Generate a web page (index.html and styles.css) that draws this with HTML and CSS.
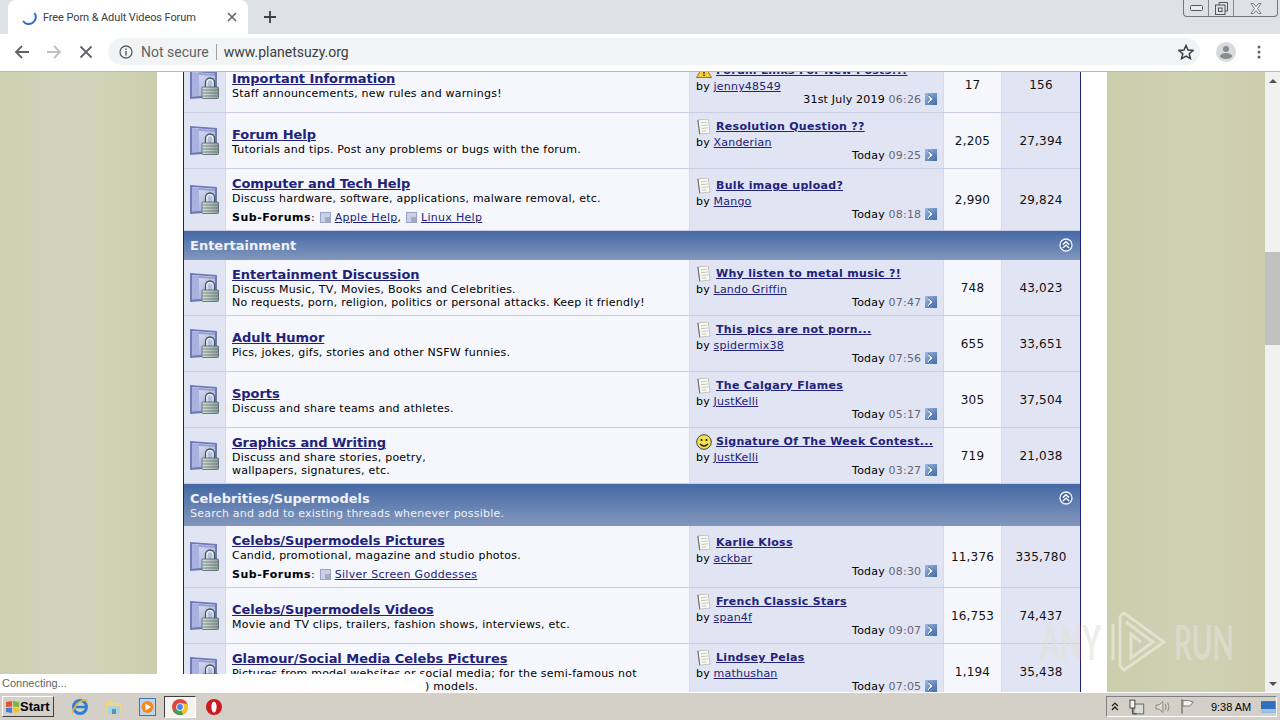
FILE: index.html
```html
<!DOCTYPE html>
<html lang="en">
<head>
    <meta charset="UTF-8">
    <meta name="viewport" content="width=device-width, initial-scale=1.0">
    <title>Free Porn &amp; Adult Videos Forum</title>
    <link rel="stylesheet" href="styles.css">
</head>
<body>
    <svg class="defs" width="0" height="0">
        <defs>
            <linearGradient id="gFolder" x1="0" y1="0" x2="1" y2="1">
                <stop offset="0" stop-color="#e4e6f8"/>
                <stop offset="1" stop-color="#98a3d0"/>
            </linearGradient>
            <linearGradient id="gLock" x1="0" y1="0" x2="1" y2="0">
                <stop offset="0" stop-color="#dbe5e2"/>
                <stop offset="1" stop-color="#8d9f9d"/>
            </linearGradient>
            <linearGradient id="gArrow" x1="0" y1="0" x2="1" y2="1">
                <stop offset="0" stop-color="#9dbbe6"/>
                <stop offset="1" stop-color="#3f69a8"/>
            </linearGradient>
            <symbol id="lockFolder" viewBox="0 0 29 29">
                <path d="M0 0 L27 2 V27 L0 29 Z" fill="#6f7ab8"/>
                <path d="M2 2 L25 3.500 V25 L2 26.500 Z" fill="url(#gFolder)"/>
                <path d="M2 2 L9 3 V25.500 L2 26.500 Z" fill="#a9b1e0"/>
                <path d="M9 3 L25 4 V6 L9 5 Z" fill="#98a2d0"/>
                <path d="M15.500 17 V12.500 a4.500 4.500 0 0 1 9 0 V17" fill="none" stroke="#46545a" stroke-width="1.300"/>
                <path d="M17 17 V12.700 a3 3 0 0 1 6 0 V17" fill="none" stroke="#eef2f2" stroke-width="1.200"/>
                <rect x="12" y="17" width="16.500" height="11.500" rx="1" fill="url(#gLock)" stroke="#4f5f5e" stroke-width=".8"/>
                <path d="M12.500 20 H28 M12.500 23 H28 M12.500 26 H28" stroke="#667877" stroke-width=".9"/>
            </symbol>
            <symbol id="subFolder" viewBox="0 0 11 11">
                <rect width="11" height="11" fill="#98a3c8"/>
                <rect x="1" y="1" width="9" height="9" fill="#c9d0e8"/>
                <rect x="5" y="5" width="5" height="5" fill="#a2adb8"/>
            </symbol>
            <symbol id="doc" viewBox="0 0 15 17">
                <path d="M1 1 L12 0 L14 15 L3 16 Z" fill="#fafaf6" stroke="#b4b4aa" stroke-width=".8"/>
                <path d="M1 1 L3 16" stroke="#6a6a64" stroke-width="1.100"/>
                <path d="M4 4 L11 3.400 M4.400 7 L11.600 6.400 M4.800 10 L12 9.400 M5 13 L10 12.600" stroke="#c2c2b8" stroke-width="1"/>
            </symbol>
            <symbol id="goPost" viewBox="0 0 12 12">
                <rect width="12" height="12" fill="url(#gArrow)"/>
                <path d="M4 2 L8.500 6 L4 10 H2.500 L5.500 6 L2.500 2 Z" fill="#fff"/>
                <path d="M3 2 H4 L8.500 6 L4 10" fill="none" stroke="#1f3f78" stroke-width=".8"/>
            </symbol>
            <symbol id="collapse" viewBox="0 0 14 14">
                <circle cx="7" cy="7" r="6" fill="#46689f" stroke="#f0f4fa" stroke-width="1.300"/>
                <path d="M3.800 6.600 L7 3.800 L10.200 6.600 M3.800 10 L7 7.200 L10.200 10" fill="none" stroke="#fff" stroke-width="1.400"/>
            </symbol>
        </defs>
    </svg>

    <div class="tabstrip">
        <div class="tab">
            <svg class="spinner" width="16" height="16" viewBox="0 0 16 16"><path d="M13.500 4 A7 7 0 0 1 2 12" fill="none" stroke="#2a6fd0" stroke-width="2"/></svg>
            <span class="tabTitle">Free Porn &amp; Adult Videos Forum</span>
            <svg class="tabClose" width="10" height="10" viewBox="0 0 10 10"><path d="M1 1 L9 9 M9 1 L1 9" stroke="#5f6368" stroke-width="1.600"/></svg>
        </div>
        <svg class="newTab" width="12" height="12" viewBox="0 0 12 12"><path d="M6 0 V12 M0 6 H12" stroke="#3c4043" stroke-width="1.800"/></svg>
        <div class="winControls">
            <div class="winBtn winMin"><svg width="13" height="6" viewBox="0 0 13 6"><rect x=".5" y=".5" width="12" height="5" rx="1" fill="#e8eaee" stroke="#555"/></svg></div>
            <div class="winBtn winMax"><svg width="13" height="13" viewBox="0 0 13 13"><path d="M4 3 V.5 H12.500 V9 H10" fill="none" stroke="#555"/><rect x=".5" y="3" width="9.500" height="9.500" fill="none" stroke="#555"/><rect x="3.500" y="6" width="3.500" height="3.500" fill="none" stroke="#555"/></svg></div>
            <div class="winBtn winClose"><svg width="12" height="11" viewBox="0 0 12 11"><path d="M1 .5 H3.500 L6 3.500 L8.500 .5 H11 L7.500 5.500 L11 10.500 H8.500 L6 7.500 L3.500 10.500 H1 L4.500 5.500 Z" fill="#eef0f3" stroke="#666" stroke-width=".8"/></svg></div>
        </div>
    </div>

    <div class="toolbar">
        <svg class="navIcon" width="16" height="16" viewBox="0 0 16 16"><path d="M15 8 H2 M8 2 L2 8 L8 14" fill="none" stroke="#5f6368" stroke-width="1.800"/></svg>
        <svg class="navIcon" width="16" height="16" viewBox="0 0 16 16"><path d="M1 8 H14 M8 2 L14 8 L8 14" fill="none" stroke="#bdc1c6" stroke-width="1.800"/></svg>
        <svg class="navIcon" width="16" height="16" viewBox="0 0 16 16"><path d="M2.500 2.500 L13.500 13.500 M13.500 2.500 L2.500 13.500" stroke="#5f6368" stroke-width="1.800"/></svg>
        <div class="omnibox">
            <svg width="14" height="14" viewBox="0 0 14 14"><circle cx="7" cy="7" r="6" fill="none" stroke="#5f6368" stroke-width="1.300"/><path d="M7 6 V10.500 M7 3.500 V5" stroke="#5f6368" stroke-width="1.500"/></svg>
            <span class="notSecure">Not secure</span>
            <span class="omniDivider"></span>
            <span class="url">www.planetsuzy.org</span>
            <svg class="star" width="16" height="16" viewBox="0 0 16 16"><path d="M8 1.500 L10 6 L15 6.500 L11.200 9.700 L12.400 14.600 L8 12 L3.600 14.600 L4.800 9.700 L1 6.500 L6 6 Z" fill="none" stroke="#3c4043" stroke-width="1.500"/></svg>
        </div>
        <svg class="avatar" width="20" height="20" viewBox="0 0 20 20"><circle cx="10" cy="10" r="10" fill="#d9dadc"/><circle cx="10" cy="7" r="3" fill="#8a8c8f"/><ellipse cx="10" cy="14" rx="6" ry="3" fill="#8a8c8f"/></svg>
        <svg class="menuDots" width="4" height="14" viewBox="0 0 4 14"><circle cx="2" cy="2" r="1.500" fill="#5f6368"/><circle cx="2" cy="7" r="1.500" fill="#5f6368"/><circle cx="2" cy="12" r="1.500" fill="#5f6368"/></svg>
    </div>

    <div class="viewport">
        <div class="page">
            <div class="forumList">

                <div class="row">
                    <div class="cell iconCell"><svg class="lockIcon"><use href="#lockFolder"/></svg></div>
                    <div class="cell mainCell">
                        <a class="forumTitle" href="#">Important Information</a>
                        <p class="desc">Staff announcements, new rules and warnings!</p>
                    </div>
                    <div class="cell postCell">
                        <div class="postTitle">
                            <svg class="threadIcon" viewBox="0 0 16 14"><path d="M8 .5 L15.500 13.500 H.5 Z" fill="#f6cf3a" stroke="#9a7a10"/><path d="M8 5 V9.500 M8 10.500 V12" stroke="#222" stroke-width="1.500"/></svg>
                            <a href="#">Forum Links For New Posts!!!</a>
                        </div>
                        <div class="postBy">by <a href="#">jenny48549</a></div>
                        <div class="postDate">31st July 2019 <span class="time">06:26</span> <svg class="goIcon"><use href="#goPost"/></svg></div>
                    </div>
                    <div class="cell numCell">17</div>
                    <div class="cell numCell alt">156</div>
                </div>

                <div class="row">
                    <div class="cell iconCell"><svg class="lockIcon"><use href="#lockFolder"/></svg></div>
                    <div class="cell mainCell">
                        <a class="forumTitle" href="#">Forum Help</a>
                        <p class="desc">Tutorials and tips. Post any problems or bugs with the forum.</p>
                    </div>
                    <div class="cell postCell">
                        <div class="postTitle"><svg class="threadIcon"><use href="#doc"/></svg><a href="#">Resolution Question ??</a></div>
                        <div class="postBy">by <a href="#">Xanderian</a></div>
                        <div class="postDate">Today <span class="time">09:25</span> <svg class="goIcon"><use href="#goPost"/></svg></div>
                    </div>
                    <div class="cell numCell">2,205</div>
                    <div class="cell numCell alt">27,394</div>
                </div>

                <div class="row tall">
                    <div class="cell iconCell"><svg class="lockIcon"><use href="#lockFolder"/></svg></div>
                    <div class="cell mainCell">
                        <a class="forumTitle" href="#">Computer and Tech Help</a>
                        <p class="desc">Discuss hardware, software, applications, malware removal, etc.</p>
                        <div class="subForums"><strong>Sub-Forums</strong>: <svg class="subIcon"><use href="#subFolder"/></svg> <a href="#">Apple Help</a>, <svg class="subIcon"><use href="#subFolder"/></svg> <a href="#">Linux Help</a></div>
                    </div>
                    <div class="cell postCell">
                        <div class="postTitle"><svg class="threadIcon"><use href="#doc"/></svg><a href="#">Bulk image upload?</a></div>
                        <div class="postBy">by <a href="#">Mango</a></div>
                        <div class="postDate">Today <span class="time">08:18</span> <svg class="goIcon"><use href="#goPost"/></svg></div>
                    </div>
                    <div class="cell numCell">2,990</div>
                    <div class="cell numCell alt">29,824</div>
                </div>

                <div class="catHead">
                    <div><div class="catTitle">Entertainment</div></div>
                    <svg class="collapseIcon"><use href="#collapse"/></svg>
                </div>

                <div class="row">
                    <div class="cell iconCell"><svg class="lockIcon"><use href="#lockFolder"/></svg></div>
                    <div class="cell mainCell">
                        <a class="forumTitle" href="#">Entertainment Discussion</a>
                        <p class="desc">Discuss Music, TV, Movies, Books and Celebrities.<br>No requests, porn, religion, politics or personal attacks. Keep it friendly!</p>
                    </div>
                    <div class="cell postCell">
                        <div class="postTitle"><svg class="threadIcon"><use href="#doc"/></svg><a href="#">Why listen to metal music ?!</a></div>
                        <div class="postBy">by <a href="#">Lando Griffin</a></div>
                        <div class="postDate">Today <span class="time">07:47</span> <svg class="goIcon"><use href="#goPost"/></svg></div>
                    </div>
                    <div class="cell numCell">748</div>
                    <div class="cell numCell alt">43,023</div>
                </div>

                <div class="row">
                    <div class="cell iconCell"><svg class="lockIcon"><use href="#lockFolder"/></svg></div>
                    <div class="cell mainCell">
                        <a class="forumTitle" href="#">Adult Humor</a>
                        <p class="desc">Pics, jokes, gifs, stories and other NSFW funnies.</p>
                    </div>
                    <div class="cell postCell">
                        <div class="postTitle"><svg class="threadIcon"><use href="#doc"/></svg><a href="#">This pics are not porn...</a></div>
                        <div class="postBy">by <a href="#">spidermix38</a></div>
                        <div class="postDate">Today <span class="time">07:56</span> <svg class="goIcon"><use href="#goPost"/></svg></div>
                    </div>
                    <div class="cell numCell">655</div>
                    <div class="cell numCell alt">33,651</div>
                </div>

                <div class="row">
                    <div class="cell iconCell"><svg class="lockIcon"><use href="#lockFolder"/></svg></div>
                    <div class="cell mainCell">
                        <a class="forumTitle" href="#">Sports</a>
                        <p class="desc">Discuss and share teams and athletes.</p>
                    </div>
                    <div class="cell postCell">
                        <div class="postTitle"><svg class="threadIcon"><use href="#doc"/></svg><a href="#">The Calgary Flames</a></div>
                        <div class="postBy">by <a href="#">JustKelli</a></div>
                        <div class="postDate">Today <span class="time">05:17</span> <svg class="goIcon"><use href="#goPost"/></svg></div>
                    </div>
                    <div class="cell numCell">305</div>
                    <div class="cell numCell alt">37,504</div>
                </div>

                <div class="row">
                    <div class="cell iconCell"><svg class="lockIcon"><use href="#lockFolder"/></svg></div>
                    <div class="cell mainCell">
                        <a class="forumTitle" href="#">Graphics and Writing</a>
                        <p class="desc">Discuss and share stories, poetry,<br>wallpapers, signatures, etc.</p>
                    </div>
                    <div class="cell postCell">
                        <div class="postTitle">
                            <svg class="threadIcon" viewBox="0 0 16 16"><circle cx="8" cy="8" r="7.300" fill="#f4e04a" stroke="#444"/><circle cx="5.500" cy="6" r="1.100" fill="#222"/><circle cx="10.500" cy="6" r="1.100" fill="#222"/><path d="M4 10 Q8 14 12 10" fill="none" stroke="#222" stroke-width="1.200"/></svg>
                            <a href="#">Signature Of The Week Contest...</a>
                        </div>
                        <div class="postBy">by <a href="#">JustKelli</a></div>
                        <div class="postDate">Today <span class="time">03:27</span> <svg class="goIcon"><use href="#goPost"/></svg></div>
                    </div>
                    <div class="cell numCell">719</div>
                    <div class="cell numCell alt">21,038</div>
                </div>

                <div class="catHead catHeadTall">
                    <div>
                        <div class="catTitle">Celebrities/Supermodels</div>
                        <div class="catDesc">Search and add to existing threads whenever possible.</div>
                    </div>
                    <svg class="collapseIcon"><use href="#collapse"/></svg>
                </div>

                <div class="row tall">
                    <div class="cell iconCell"><svg class="lockIcon"><use href="#lockFolder"/></svg></div>
                    <div class="cell mainCell">
                        <a class="forumTitle" href="#">Celebs/Supermodels Pictures</a>
                        <p class="desc">Candid, promotional, magazine and studio photos.</p>
                        <div class="subForums"><strong>Sub-Forums</strong>: <svg class="subIcon"><use href="#subFolder"/></svg> <a href="#">Silver Screen Goddesses</a></div>
                    </div>
                    <div class="cell postCell">
                        <div class="postTitle"><svg class="threadIcon"><use href="#doc"/></svg><a href="#">Karlie Kloss</a></div>
                        <div class="postBy">by <a href="#">ackbar</a></div>
                        <div class="postDate">Today <span class="time">08:30</span> <svg class="goIcon"><use href="#goPost"/></svg></div>
                    </div>
                    <div class="cell numCell">11,376</div>
                    <div class="cell numCell alt">335,780</div>
                </div>

                <div class="row">
                    <div class="cell iconCell"><svg class="lockIcon"><use href="#lockFolder"/></svg></div>
                    <div class="cell mainCell">
                        <a class="forumTitle" href="#">Celebs/Supermodels Videos</a>
                        <p class="desc">Movie and TV clips, trailers, fashion shows, interviews, etc.</p>
                    </div>
                    <div class="cell postCell">
                        <div class="postTitle"><svg class="threadIcon"><use href="#doc"/></svg><a href="#">French Classic Stars</a></div>
                        <div class="postBy">by <a href="#">span4f</a></div>
                        <div class="postDate">Today <span class="time">09:07</span> <svg class="goIcon"><use href="#goPost"/></svg></div>
                    </div>
                    <div class="cell numCell">16,753</div>
                    <div class="cell numCell alt">74,437</div>
                </div>

                <div class="row">
                    <div class="cell iconCell"><svg class="lockIcon"><use href="#lockFolder"/></svg></div>
                    <div class="cell mainCell">
                        <a class="forumTitle" href="#">Glamour/Social Media Celebs Pictures</a>
                        <p class="desc">Pictures from model websites or social media; for the semi-famous not<br>so famous (or soon to be famous!) models.</p>
                    </div>
                    <div class="cell postCell">
                        <div class="postTitle"><svg class="threadIcon"><use href="#doc"/></svg><a href="#">Lindsey Pelas</a></div>
                        <div class="postBy">by <a href="#">mathushan</a></div>
                        <div class="postDate">Today <span class="time">07:05</span> <svg class="goIcon"><use href="#goPost"/></svg></div>
                    </div>
                    <div class="cell numCell">1,194</div>
                    <div class="cell numCell alt">35,438</div>
                </div>

            </div>
        </div>

        <div class="scrollbar">
            <div class="scrollArrow"><span class="arrowUp"></span></div>
            <div class="scrollTrack"><div class="scrollThumb"></div></div>
            <div class="scrollArrow"><span class="arrowDown"></span></div>
        </div>

        <div class="statusBubble">Connecting...</div>

        <div class="watermark">
            <span class="wmText wmAny">ANY</span>
            <svg width="62" height="64" viewBox="0 0 62 64"><path d="M6 14 V50 M13 6 V56 L17 60 L57 32 L17 3 L13 6 M19 12 L46 32 L24 48 V24 L34 32" fill="none" stroke="#eeeee4" stroke-opacity=".6" stroke-width="3"/></svg>
            <span class="wmText wmRun">RUN</span>
        </div>
    </div>

    <div class="taskbar">
        <div class="startBtn">
            <svg width="15" height="14" viewBox="0 0 15 14"><path d="M1 2 L7 1 V6.500 L1 7 Z" fill="#e2552c"/><path d="M8 1 L14 2 V7 L8 6.500 Z" fill="#7cb63e"/><path d="M1 8 L7 7.500 V13 L1 12 Z" fill="#3f7fd6"/><path d="M8 7.500 L14 8 V12 L8 13 Z" fill="#f2c42c"/></svg>
            <span>Start</span>
        </div>
        <div class="quickLaunch">
            <svg class="tbIcon" width="18" height="18" viewBox="0 0 18 18"><circle cx="9" cy="9" r="6.500" fill="none" stroke="#2f7fd4" stroke-width="3"/><path d="M3 9 H15" stroke="#2f7fd4" stroke-width="2.500"/><path d="M1 15 Q6 1 17 2" fill="none" stroke="#e5b83a" stroke-width="1.500"/></svg>
            <svg class="tbIcon" width="18" height="18" viewBox="0 0 18 18"><path d="M1 3 H7 L9 5 H16 V16 H1 Z" fill="#efd77e"/><rect x="3" y="8" width="12" height="8" fill="#a9d4e8"/><rect x="7" y="11" width="4" height="5" fill="#5f93b5"/></svg>
            <svg class="tbIcon" width="18" height="18" viewBox="0 0 18 18"><rect x=".5" y=".5" width="16" height="17" fill="#bcd6ee" stroke="#3f76b2"/><circle cx="8.500" cy="9" r="6" fill="#f08a1e"/><path d="M6.500 5.500 L12 9 L6.500 12.500 Z" fill="#fff"/></svg>
            <div class="tbActive">
                <svg width="16" height="16" viewBox="0 0 16 16"><circle cx="8" cy="8" r="8" fill="#e2463a"/><path d="M8 8 L1 12 A8 8 0 0 0 11 15.400 Z" fill="#3ba458"/><path d="M8 8 L11 15.400 A8 8 0 0 0 15.400 5 L8 4 Z" fill="#f4c430"/><circle cx="8" cy="8" r="3.800" fill="#fff"/><circle cx="8" cy="8" r="2.900" fill="#4a84e8"/></svg>
            </div>
            <svg class="tbIcon" width="16" height="16" viewBox="0 0 16 16"><circle cx="8" cy="8" r="8" fill="#cc1a1f"/><ellipse cx="8" cy="8" rx="2.600" ry="5.500" fill="#fff"/></svg>
        </div>
        <div class="tray">
            <svg width="8" height="9" viewBox="0 0 8 9"><path d="M1 4 L4 1 L7 4 M1 8 L4 5 L7 8" fill="none" stroke="#222" stroke-width="1.300"/></svg>
            <svg width="16" height="16" viewBox="0 0 16 16"><rect x="5" y="5" width="10" height="10" fill="#dcdcd4" stroke="#666"/><rect x="1" y="1" width="5" height="8" fill="#f4f4f0" stroke="#444"/><path d="M3.500 9 V15 H8" fill="none" stroke="#444"/></svg>
            <svg width="16" height="14" viewBox="0 0 16 14"><path d="M1 5 H4 L8 1.500 V12.500 L4 9 H1 Z" fill="#dcdcd4" stroke="#888"/><path d="M10.500 4 Q12 7 10.500 10 M13 2.500 Q15.500 7 13 11.500" fill="none" stroke="#888"/></svg>
            <svg width="15" height="15" viewBox="0 0 15 15"><path d="M2 0 V15" stroke="#666" stroke-width="1.200"/><path d="M3 1.500 H9 L13.500 3 L10 7 H3 Z" fill="#f4f4f0" stroke="#777"/></svg>
            <span class="clock">9:38 AM</span>
            <svg width="15" height="12" viewBox="0 0 15 12"><rect width="15" height="12" fill="#2f6fc0"/><rect y="8" width="15" height="4" fill="#9dc3e6"/></svg>
        </div>
    </div>
</body>
</html>
```

FILE: styles.css
```css
* {
    box-sizing: border-box;
}

body {
    margin: 0;
    width: 1280px;
    height: 720px;
    overflow: hidden;
    display: flex;
    flex-direction: column;
    font-family: "DejaVu Sans", Verdana, sans-serif;
    font-size: 11px;
    color: #000;
}

.defs {
    position: absolute;
}

/* browser chrome */
.tabstrip {
    height: 34px;
    flex: none;
    display: flex;
    align-items: flex-end;
    background-color: #dee1e6;
    padding-left: 8px;
    position: relative;
}

.tab {
    width: 240px;
    height: 34px;
    background-color: #fff;
    border-radius: 8px 8px 0 0;
    display: flex;
    align-items: center;
    padding-left: 13px;
    font-family: Roboto, sans-serif;
    font-size: 11px;
    letter-spacing: -0.1px;
    color: #3c4043;
}

.tabTitle {
    margin-left: 6px;
    flex: 1;
}

.tabClose {
    margin-right: 11px;
}

.newTab {
    margin: 0 0 11px 16px;
}

.winControls {
    position: absolute;
    top: 0;
    right: 2px;
    width: 95px;
    height: 17px;
    display: flex;
    border: 1px solid #777;
    border-top: none;
    border-radius: 0 0 4px 4px;
}

.winBtn {
    display: flex;
    align-items: center;
    justify-content: center;
    border-right: 1px solid #888;
}

.winMin {
    width: 25px;
}

.winMax {
    width: 25px;
}

.winClose {
    flex: 1;
    border-right: none;
}

.toolbar {
    height: 38px;
    flex: none;
    display: flex;
    align-items: center;
    background-color: #fff;
    border-bottom: 1px solid #b8b8b8;
    padding: 0 0 2px 14px;
}

.navIcon {
    margin-right: 16px;
}

.omnibox {
    width: 1092px;
    height: 27px;
    margin-left: -2px;
    border-radius: 14px;
    background-color: #f1f3f4;
    display: flex;
    align-items: center;
    padding-left: 11px;
    font-family: Roboto, sans-serif;
    font-size: 14px;
}

.notSecure {
    margin-left: 8px;
    color: #5f6368;
}

.omniDivider {
    width: 1px;
    height: 16px;
    margin: 0 7px;
    background-color: #9aa0a6;
}

.url {
    color: #3c4043;
}

.star {
    margin-left: auto;
    margin-right: 6px;
}

.avatar {
    margin-left: 16px;
}

.menuDots {
    margin-left: 21px;
}

/* page */
.viewport {
    height: 620px;
    flex: none;
    position: relative;
    display: flex;
    overflow: hidden;
    background: linear-gradient(90deg, #cdd0b2 0, #d1d4ba 6%, #cccfae 12%, #cccfae 88%, #cfd1b4 94%, #cbcdab 100%);
}

.page {
    width: 950px;
    margin-left: 157px;
    margin-right: 158px;
    padding: 0 26px;
    background-color: #fff;
    flex: none;
}

.forumList {
    width: 898px;
    margin-top: -15px;
    border-left: 1px solid #22227a;
    border-right: 1px solid #22227a;
}

.row {
    height: 56px;
    display: grid;
    grid-template-columns: 42px 464px 254px 58px 1fr;
    border-bottom: 1px solid #c9cee2;
}

.row.tall {
    height: 62px;
}

.cell {
    display: flex;
    flex-direction: column;
    justify-content: center;
    border-right: 1px solid #d5d9ea;
    background-color: #f5f7fd;
}

.iconCell {
    align-items: center;
    background-color: #e1e4f3;
}

.lockIcon {
    width: 29px;
    height: 29px;
}

.mainCell {
    padding: 1px 0 0 6px;
}

.forumTitle {
    font-size: 13px;
    font-weight: bold;
    line-height: 16px;
    letter-spacing: -0.05px;
    color: #22227a;
}

a {
    color: #22227a;
}

.desc {
    margin: 0;
    font-size: 11px;
    line-height: 13px;
    letter-spacing: 0.22px;
}

.subForums {
    margin-top: 6px;
    line-height: 13px;
    letter-spacing: 0.3px;
}

.subForums strong {
    letter-spacing: 0.5px;
}

.subIcon {
    width: 11px;
    height: 11px;
    vertical-align: -2px;
    margin-left: 1px;
}

.postCell {
    padding: 0 6px;
    background-color: #e1e4f3;
    letter-spacing: 0.2px;
}

.postTitle {
    height: 16px;
    display: flex;
    align-items: center;
    font-weight: bold;
    line-height: 16px;
    letter-spacing: 0.3px;
}

.threadIcon {
    width: 16px;
    height: 16px;
    margin-right: 4px;
    flex: none;
}

.postBy {
    line-height: 16px;
}

.postDate {
    margin-top: -2px;
    line-height: 13px;
    text-align: right;
}

.time {
    color: #667;
}

.goIcon {
    width: 12px;
    height: 12px;
    vertical-align: -2px;
}

.numCell {
    align-items: center;
    font-size: 12px;
    letter-spacing: 0.2px;
    color: #111;
}

.numCell.alt {
    background-color: #e1e4f3;
    border-right: none;
}

.catHead {
    height: 29px;
    display: flex;
    align-items: center;
    justify-content: space-between;
    padding: 0 7px 0 6px;
    color: #f0f2f8;
    background: linear-gradient(180deg, #4569a5, #8297bd);
}

.catHeadTall {
    height: 42px;
    padding-top: 2px;
}

.catTitle {
    font-size: 13px;
    font-weight: bold;
    line-height: 15px;
}

.catDesc {
    padding-top: 1px;
    line-height: 14px;
    letter-spacing: 0.22px;
}

.collapseIcon {
    width: 14px;
    height: 14px;
    align-self: flex-start;
    margin-top: 7px;
}

.catHeadTall .collapseIcon {
    margin-top: 5px;
}

/* scrollbar */
.scrollbar {
    width: 15px;
    flex: none;
    display: flex;
    flex-direction: column;
    background-color: #f1f1f1;
}

.scrollArrow {
    height: 17px;
    flex: none;
    display: flex;
    align-items: center;
    justify-content: center;
}

.arrowUp {
    border: 4px solid transparent;
    border-top: none;
    border-bottom: 4px solid #505050;
}

.arrowDown {
    border: 4px solid transparent;
    border-bottom: none;
    border-top: 4px solid #505050;
}

.scrollTrack {
    flex: 1;
    padding-top: 163px;
}

.scrollThumb {
    height: 93px;
    background-color: #c1c1c1;
}

.statusBubble {
    position: absolute;
    left: 0;
    bottom: 0;
    width: 425px;
    height: 18px;
    padding-left: 2px;
    background-color: #fff;
    font-family: "Liberation Sans", sans-serif;
    font-size: 11px;
    line-height: 18px;
    color: #666;
}

.watermark {
    position: absolute;
    left: 1040px;
    top: 538px;
    display: flex;
    align-items: center;
    gap: 5px;
    pointer-events: none;
}

.wmText {
    display: block;
    font-family: Lato, sans-serif;
    font-size: 48px;
    font-weight: 700;
    line-height: 64px;
    color: rgba(225, 225, 218, 0.6);
    transform-origin: left center;
}

.wmAny {
    width: 62px;
    transform: scaleX(0.6);
}

.wmRun {
    width: 57px;
    transform: scaleX(0.58);
}

/* taskbar */
.taskbar {
    flex: 1;
    display: flex;
    align-items: center;
    background-color: #d4d0c8;
    border-top: 1px solid #fff;
    padding: 0 3px 0 2px;
    font-family: "Liberation Sans", sans-serif;
}

.startBtn {
    width: 52px;
    height: 21px;
    display: flex;
    align-items: center;
    padding-left: 2px;
    background-color: #d4d0c8;
    border: 1px solid;
    border-color: #fff #404040 #404040 #fff;
    font-size: 13px;
    font-weight: bold;
}

.quickLaunch {
    display: flex;
    align-items: center;
    margin-left: 9px;
    flex: 1;
}

.tbIcon {
    margin: 0 8px;
}

.tbActive {
    width: 32px;
    height: 22px;
    margin: 0 2px 0 -1px;
    display: flex;
    align-items: center;
    justify-content: center;
    background-color: #f4f3f0;
    border: 1px solid;
    border-color: #404040 #fff #fff #404040;
}

.tray {
    width: 171px;
    height: 21px;
    display: flex;
    align-items: center;
    gap: 10px;
    padding-left: 4px;
    border: 1px solid;
    border-color: #808080 #fff #fff #808080;
    font-size: 11px;
}

.clock {
    margin-left: 6px;
    white-space: nowrap;
}
```
